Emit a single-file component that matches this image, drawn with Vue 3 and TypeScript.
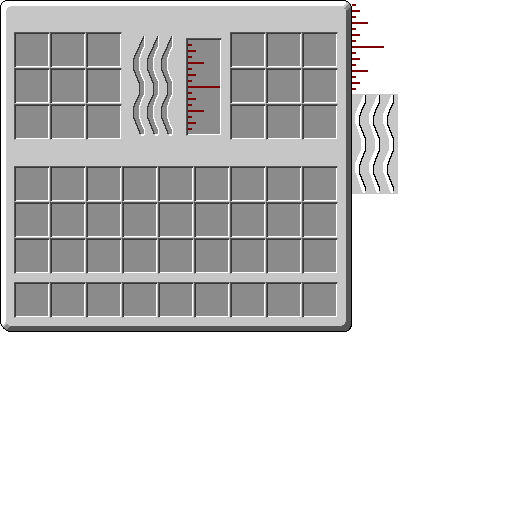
<script setup lang="ts">
type Point = [x: number, y: number]

const ticks: number[] = [4, 8, 4, 16, 4, 8, 4, 32, 4, 8, 4, 16, 4, 8, 4]
const waves: number[] = [0, 14, 28]

// One column per pixel row along a polyline whose points run downwards.
function columns(points: Point[]): number[] {
  const result: number[] = []
  for (let i = 1; i < points.length; i++) {
    const [x0, y0] = points[i - 1]
    const [x1, y1] = points[i]
    for (let y = y0; y < y1; y++) {
      result.push(Math.round(x0 + ((x1 - x0) * (y - y0)) / (y1 - y0)))
    }
  }
  return result
}

function row(x0: number, x1: number, y: number): string {
  return `M${x0} ${y}H${x1}V${y + 1}H${x0}Z`
}

// A pixel line whose steps overlap, so that the corners stay joined.
function stepped(points: Point[]): string {
  const xs = columns(points)
  return xs
    .map((x, i) => {
      const last = i > 0 ? xs[i - 1] : x
      return row(Math.min(x, last), Math.max(x, last) + 1, points[0][1] + i)
    })
    .join('')
}

function between(left: Point[], right: Point[]): string {
  const ends = columns(right)
  return columns(left).map((x, i) => row(x, Math.max(x, ends[i]), left[0][1] + i)).join('')
}

const slotLeft: Point[] = [[13, 4], [11, 8], [9, 13], [7, 17], [5, 21], [3, 27], [3, 36], [5, 41], [7, 46], [9, 51], [9, 61], [7, 65], [5, 69], [3, 75], [3, 84], [5, 89], [7, 94], [9, 99], [10, 102]]
const slotRight: Point[] = [[14, 4], [14, 13], [11, 20], [9, 26], [9, 36], [11, 42], [14, 49], [14, 61], [11, 68], [9, 74], [9, 84], [11, 90], [14, 97], [14, 102]]
const sheetLeft: Point[] = [[11, 1], [9, 6], [7, 10], [5, 15], [3, 20], [3, 28], [5, 33], [7, 39], [9, 45], [9, 55], [7, 59], [5, 64], [3, 69], [3, 77], [5, 82], [7, 88], [9, 94], [10, 97]]
const sheetRight: Point[] = [[13, 1], [13, 7], [11, 11], [9, 16], [7, 22], [7, 29], [9, 34], [11, 39], [13, 44], [13, 55], [11, 60], [9, 65], [7, 71], [7, 78], [9, 83], [11, 88], [13, 93], [13, 97]]

const slotFill = between(slotLeft, slotRight)
const slotShade = stepped(slotLeft)
const slotLight = stepped(slotRight)
const sheetFill = between(sheetLeft, sheetRight)
const sheetInk = stepped(sheetRight)
</script>

<template>
  <div class="screen">
    <main class="panel">
      <svg class="frame" viewBox="0 0 352 332" shape-rendering="crispEdges" aria-hidden="true">
        <path fill="#000" d="M5 0H346V1H348V2H349V3H350V4H351V6H352V327H351V329H350V330H349V331H347V332H8V331H6V330H5V329H3V327H2V326H1V324H0V5H1V3H2V2H3V1H5Z" />
        <path fill="#c6c6c6" d="M5 1H346V2H348V3H349V4H350V6H351V326H350V328H349V330H347V331H8V330H6V329H5V328H4V327H3V326H2V324H1V5H2V3H3V2H5Z" />
        <path fill="#fff" d="M5 1H345V2H346V4H345V5H344V6H10V7H8V8H7V10H6V322H5V324H4V325H2V324H1V5H2V3H3V2H5Z" />
        <path fill="#555" d="M351 6V326H350V328H349V330H347V331H8V330H7V329H8V328H9V327H10V326H342V325H344V324H345V322H346V10H347V9H348V8H349V7H350V6Z" />
        <path fill="#8b8b8b" d="M344 8H345V7H346V6H347V5H348V4H350V6H351V7H350V8H349V9H348V10H346V9H344ZM4 326H5V325H6V324H8V325H9V326H10V327H9V328H8V329H7V330H6V329H5V328H4Z" />
      </svg>

      <section class="machine">
        <div class="grid three">
          <button v-for="n in 9" :key="n" class="slot" type="button" :aria-label="`Input ${n}`"></button>
        </div>
        <svg class="waves" viewBox="0 0 48 108" shape-rendering="crispEdges" aria-hidden="true">
          <g v-for="x in waves" :key="x" :transform="`translate(${x} 0)`">
            <path fill="#8b8b8b" :d="slotFill" />
            <path fill="#fff" :d="slotLight" />
            <path fill="#373737" :d="slotShade" />
            <path fill="#fff" d="M11 102H14V101H15V103H14V104H11Z" />
          </g>
        </svg>
        <div class="gauge">
          <i v-for="(w, i) in ticks" :key="i" class="tick" :style="{ width: `${w}px` }"></i>
        </div>
        <div class="grid three">
          <button v-for="n in 9" :key="n" class="slot" type="button" :aria-label="`Output ${n}`"></button>
        </div>
      </section>
      <section class="grid nine inventory">
        <button v-for="n in 27" :key="n" class="slot" type="button" :aria-label="`Inventory ${n}`"></button>
      </section>
      <section class="grid nine hotbar">
        <button v-for="n in 9" :key="n" class="slot" type="button" :aria-label="`Hotbar ${n}`"></button>
      </section>
    </main>

    <aside class="parts">
      <div class="scale">
        <i v-for="(w, i) in ticks" :key="i" class="tick" :style="{ width: `${w}px` }"></i>
      </div>
      <svg class="wave-sheet" viewBox="0 0 46 100" shape-rendering="crispEdges" aria-hidden="true">
        <path fill="#c6c6c6" d="M0 0H46V100H0Z" />
        <g v-for="x in waves" :key="x" :transform="`translate(${x} 0)`">
          <path fill="#fff" :d="sheetFill" />
          <path fill="#fff" d="M10 97H13V99H11V98H10Z" />
          <path fill="#000" :d="sheetInk" />
        </g>
      </svg>
    </aside>
  </div>
</template>

<style>
body {
  background: #fff;
}
</style>

<style scoped>
.screen {
  display: flex;
  align-items: flex-start;
}

.panel {
  position: relative;
  flex: none;
  padding: 32px 14px 14px;
}

.frame {
  position: absolute;
  inset: 0;
  width: 100%;
  height: 100%;
  z-index: -1;
}

.machine {
  display: flex;
}

.grid {
  display: grid;
}

.three {
  grid-template-columns: repeat(3, 36px);
}

.nine {
  grid-template-columns: repeat(9, 36px);
}

.inventory {
  margin-top: 26px;
}

.hotbar {
  margin-top: 8px;
}

.slot,
.gauge {
  box-sizing: border-box;
  height: 36px;
  margin: 0;
  padding: 0;
  border: 1px solid;
  border-color: #555 #c6c6c6 #c6c6c6 #555;
  border-radius: 0;
  background: #8b8b8b;
  box-shadow: inset 1px 1px #373737, inset -1px -1px #fff;
}

.waves {
  width: 48px;
  height: 108px;
  margin-left: 8px;
}

.gauge {
  width: 36px;
  height: 98px;
  margin: 6px 8px 0;
  padding: 5px 1px;
}

.gauge,
.scale {
  display: flex;
  flex-direction: column;
  gap: 4px;
}

.tick {
  flex: none;
  height: 2px;
  background: #7f0000;
}

.scale {
  padding: 4px 0;
}

.wave-sheet {
  display: block;
  width: 46px;
  height: 100px;
}
</style>
